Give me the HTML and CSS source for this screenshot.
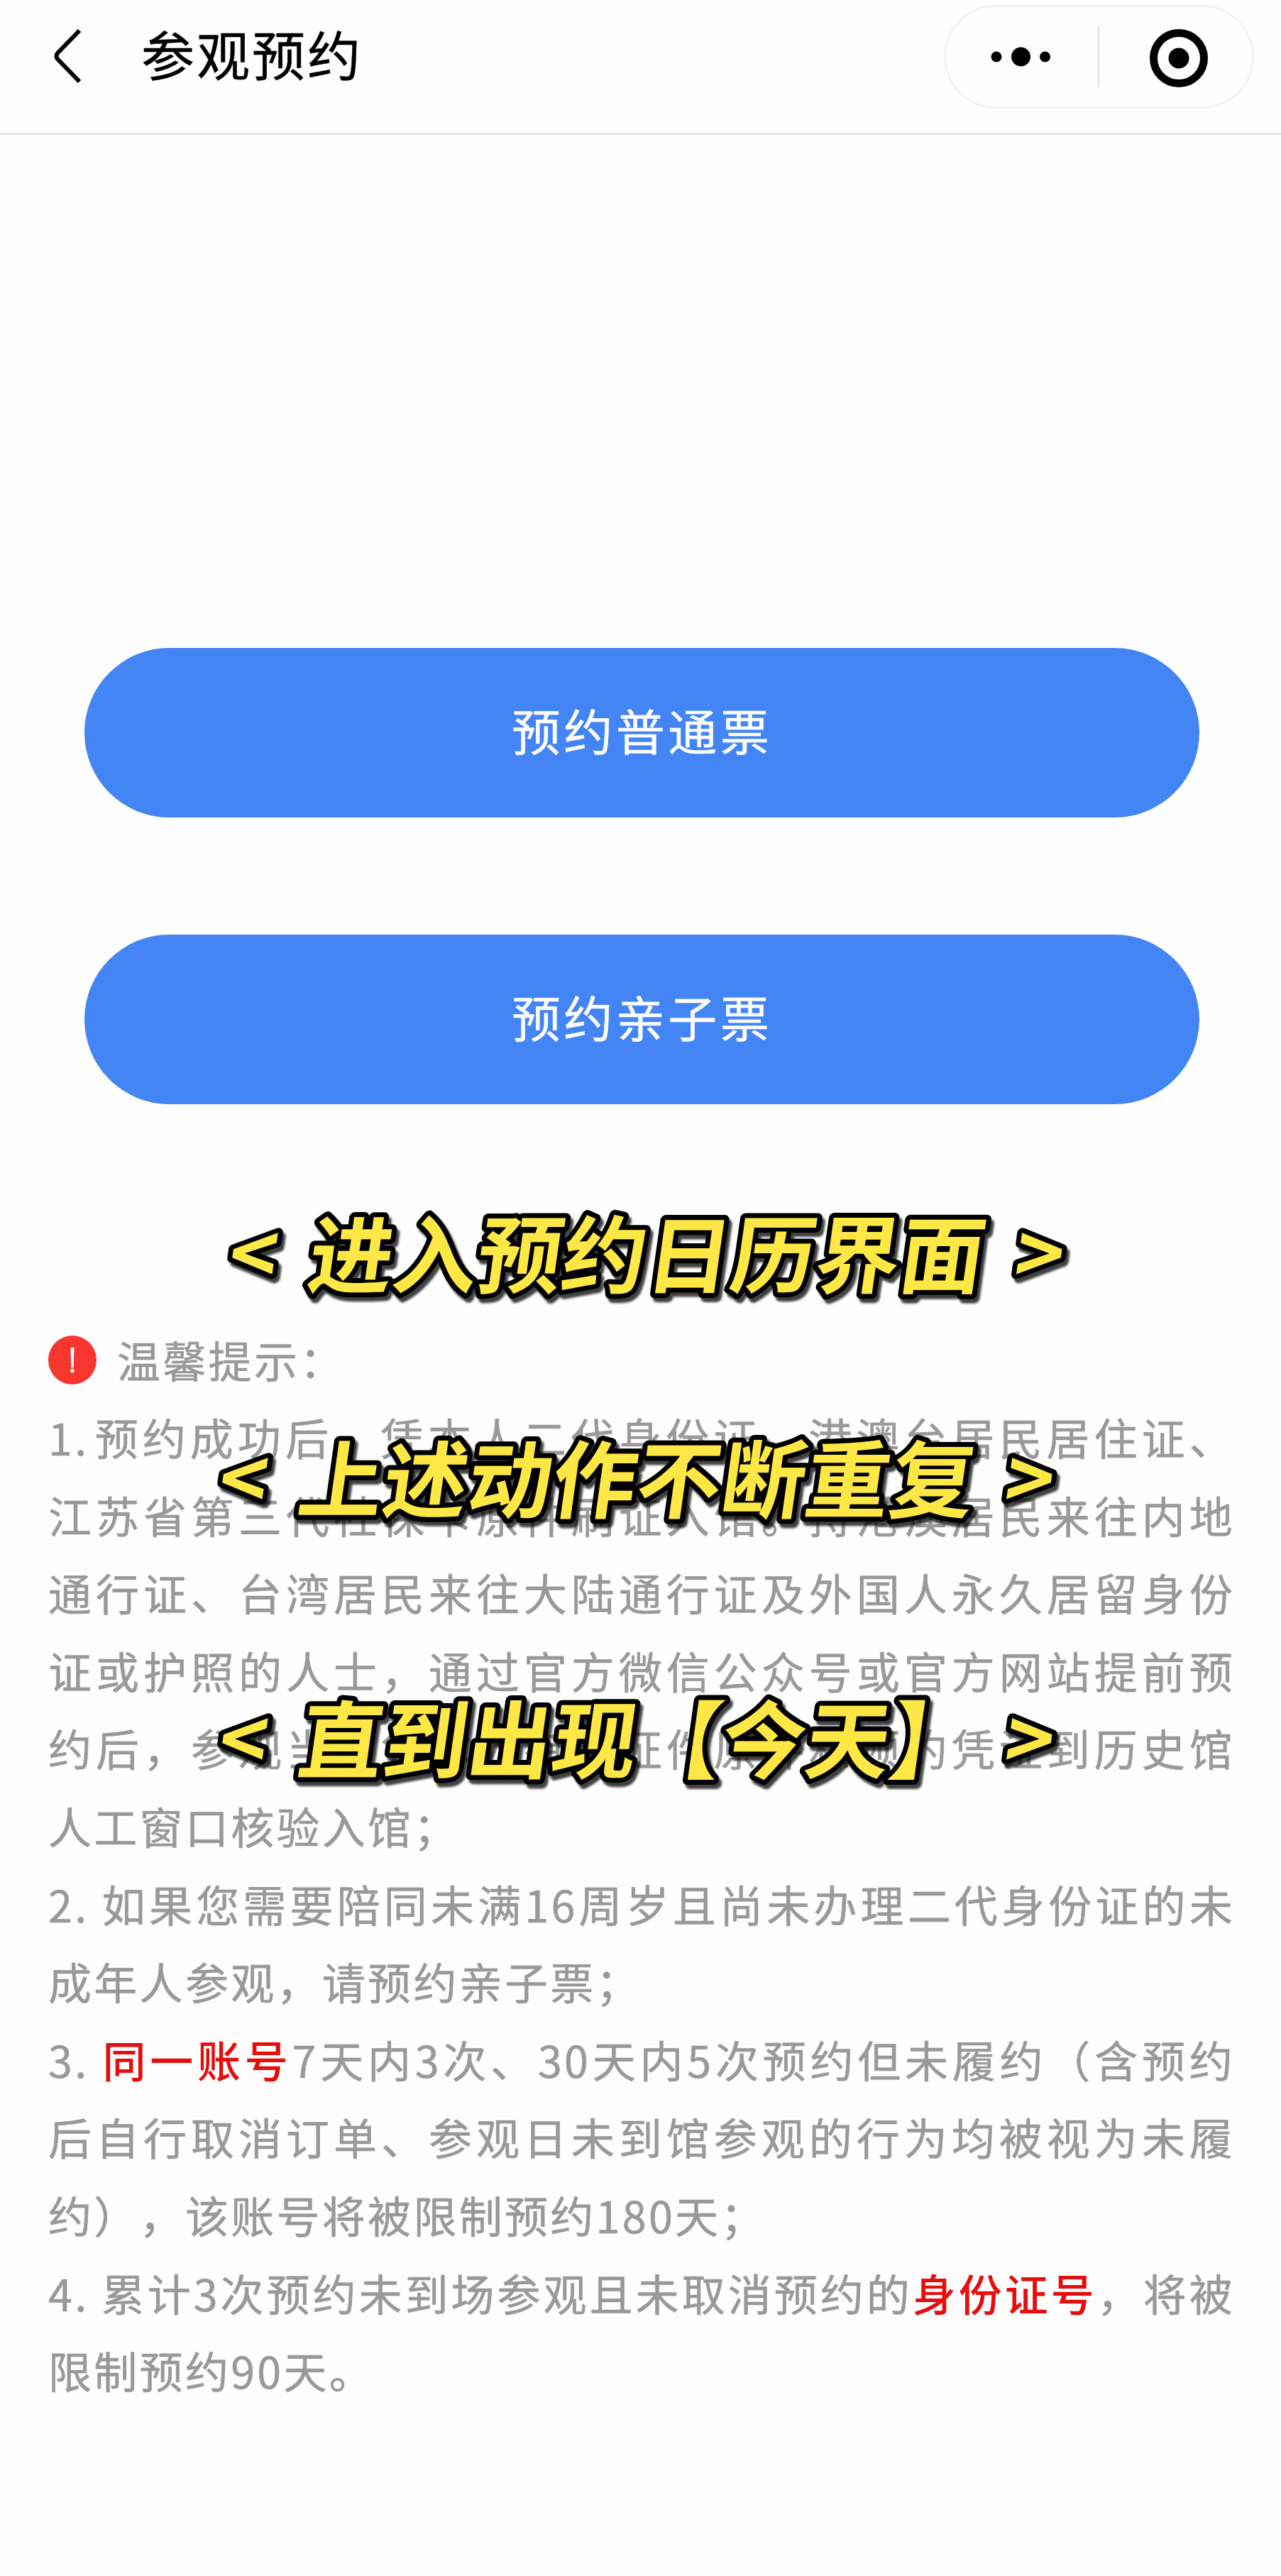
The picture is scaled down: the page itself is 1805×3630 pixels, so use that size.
FILE: index.html
```html
<!DOCTYPE html>
<html lang="zh-CN">
<head>
<meta charset="utf-8">
<title>参观预约</title>
<link rel="stylesheet" href="styles.css">
</head>
<body>
<header class="navbar">
  <svg class="back" width="48" height="84" viewBox="0 0 48 84"><path d="M42 6L11 38Q8 42 11 46L42 78" fill="none" stroke="#000" stroke-width="6"/></svg>
  <h1 class="title">参观预约</h1>
  <div class="capsule">
    <svg class="menu" width="214" height="140" viewBox="0 0 214 140"><circle cx="71" cy="70" r="7.500"/><circle cx="105.500" cy="70" r="13.500"/><circle cx="139.500" cy="70" r="7.500"/></svg>
    <span class="divider"></span>
    <svg class="target" width="215" height="140" viewBox="0 0 215 140"><circle cx="112" cy="72" r="35.500" fill="none" stroke="#000" stroke-width="11"/><circle cx="112" cy="72" r="14.500"/></svg>
  </div>
</header>
<main class="page">
  <div class="actions">
    <button class="btn">预约普通票</button>
    <button class="btn">预约亲子票</button>
  </div>
  <section class="notice">
    <div class="notice-head">
      <svg width="68" height="69" viewBox="0 0 68 69"><ellipse cx="34" cy="34.500" rx="34" ry="34.500" fill="#f73630"/><path d="M31.500 17h5l-.8 28h-3.400z" fill="#fff"/><circle cx="34" cy="49.500" r="2.800" fill="#fff"/></svg>
      <span>温馨提示：</span>
    </div>
    <p class="row full"><span class="num one">1.</span>预约成功后，凭本人二代身份证、港澳台居民居住证、</p>
    <p class="row full">江苏省第三代社保卡原件刷证入馆。持港澳居民来往内地</p>
    <p class="row full">通行证、台湾居民来往大陆通行证及外国人永久居留身份</p>
    <p class="row full">证或护照的人士，通过官方微信公众号或官方网站提前预</p>
    <p class="row full">约后，参观当日凭本人有效证件原件和预约凭证到历史馆</p>
    <p class="row">人工窗口核验入馆；</p>
    <p class="row full"><span class="num">2.</span>如果您需要陪同未满16周岁且尚未办理二代身份证的未</p>
    <p class="row">成年人参观，请预约亲子票；</p>
    <p class="row full"><span class="num">3.</span><b>同一账号</b>7天内3次、30天内5次预约但未履约（含预约</p>
    <p class="row full">后自行取消订单、参观日未到馆参观的行为均被视为未履</p>
    <p class="row">约），该账号将被限制预约180天；</p>
    <p class="row full"><span class="num">4.</span>累计3次预约未到场参观且未取消预约的<b>身份证号</b>，将被</p>
    <p class="row">限制预约90天。</p>
  </section>
  <svg class="caption c1" width="1220" height="170"><g transform="translate(0 126) skewX(-8)"><text class="ang" x="5" y="-3">&lt;</text><text x="118" y="0">进入预约日历界面</text><text class="ang" x="1113" y="-3">&gt;</text></g></svg>
  <svg class="caption c2" width="1220" height="170"><g transform="translate(0 126) skewX(-8)"><text class="ang" x="5" y="-3">&lt;</text><text x="118" y="0">上述动作不断重复</text><text class="ang" x="1113" y="-3">&gt;</text></g></svg>
  <svg class="caption c3" width="1220" height="170"><g transform="translate(0 126) skewX(-8)"><text class="ang" x="5" y="-3">&lt;</text><text x="118" y="0">直到出现【今天】</text><text class="ang" x="1113" y="-3">&gt;</text></g></svg>
</main>
</body>
</html>
```
FILE: styles.css
```css
* { box-sizing: border-box; margin: 0; padding: 0; }
body {
  position: relative;
  width: 1805px;
  height: 3630px;
  overflow: hidden;
  background: #fefefe;
  font-family: "Noto Sans CJK SC", sans-serif;
  text-spacing-trim: space-all;
}
.navbar {
  display: flex;
  align-items: flex-start;
  height: 190px;
  padding: 7px 38px 0 70px;
  border-bottom: 3px solid #e6e6e6;
}
.back { margin-top: 30px; }
.title {
  margin: 8px 0 0 81px;
  font-size: 75px;
  font-weight: 400;
  line-height: 120px;
  letter-spacing: 3px;
  color: #000;
  -webkit-text-stroke: .5px #000;
}
.capsule {
  display: flex;
  align-items: center;
  width: 437px;
  height: 146px;
  margin-left: auto;
  border: 3px solid #f3f3f3;
  border-radius: 73px;
}
.divider { flex: none; width: 2px; height: 86px; background: #ddd; }
.menu, .target { flex: none; }
.actions {
  display: flex;
  flex-direction: column;
  gap: 165px;
  padding: 723px 115px 0 119px;
}
.btn {
  height: 239px;
  border: 0;
  border-radius: 120px;
  background: #4385f5;
  color: #fff;
  font: 400 69px/231px "Noto Sans CJK SC", sans-serif;
  letter-spacing: 4.500px;
  padding-bottom: 9px;
  -webkit-text-stroke: .5px #fff;
}
.notice {
  width: 1740px;
  padding: 306px 0 0 68px;
  font-size: 61px;
  line-height: 109.600px;
  letter-spacing: 3.300px;
  color: #999;
  -webkit-text-stroke: .6px currentColor;
}
.notice-head { display: flex; align-items: center; gap: 29px; height: 108px; }
.notice-head svg { flex: none; }
.row { height: 109.600px; white-space: nowrap; }
.full { text-align: justify; text-align-last: justify; }
.num { display: inline-block; width: 74px; text-align: left; text-align-last: left; }
.one { width: 63px; }
.row b { font-weight: 500; color: #e60d0d; -webkit-text-stroke: 0; }
.caption {
  position: absolute;
  overflow: visible;
  font-size: 119px;
  font-weight: 700;
  fill: #ffe845;
  stroke: #000;
  stroke-width: 14px;
  stroke-linejoin: round;
  paint-order: stroke fill;
  filter: drop-shadow(4px 6px 1.500px rgba(0, 0, 0, .75));
}
.ang { font-size: 116px; }
.c1 { left: 312px; top: 1687px; }
.c2 { left: 298px; top: 2004px; }
.c3 { left: 298px; top: 2371px; }
```
